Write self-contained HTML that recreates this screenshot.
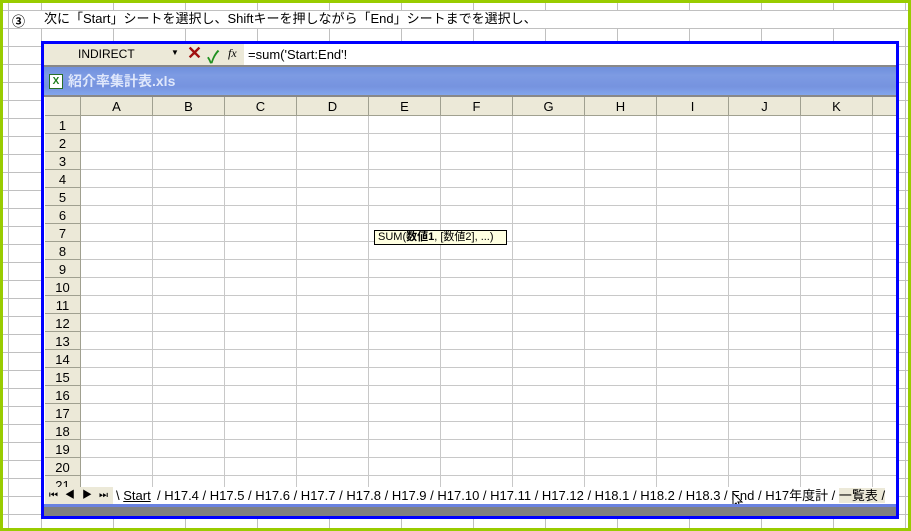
<!DOCTYPE html>
<html><head><meta charset="utf-8"><style>
*{margin:0;padding:0;box-sizing:border-box}
body{width:911px;height:531px;position:relative;overflow:hidden;background:#fff;font-family:"Liberation Sans","Noto Sans CJK JP",sans-serif}
.abs{position:absolute}
#bg{left:0;top:0;width:911px;height:531px;
background-image:linear-gradient(to right,#c0c0c0 1px,transparent 1px),linear-gradient(to bottom,#c0c0c0 1px,transparent 1px);
background-size:72px 18px;background-position:41px 10px}
#bgl{left:8px;top:0;width:1px;height:531px;background:#c0c0c0}
#green{left:0;top:0;width:911px;height:531px;border:3px solid #99cc00}
#win{left:41px;top:41px;width:858px;height:478px;border:3px solid #0000ff;background:#fff;overflow:hidden}
#fb{left:0;top:0;width:852px;height:21px;background:#ece9d8}
#fw{left:200px;top:0;width:652px;height:21px;background:#fff;font-size:13px;line-height:21px;padding-left:4px}
#title{left:0;top:21px;width:852px;height:32px;background:linear-gradient(#6f8fdc,#7d9be3 30%,#7693df 70%,#82a5ec);border-top:2px solid #888;border-bottom:2px solid #888;color:#dfe7fb;font-size:14px;font-weight:bold;line-height:28px;padding-left:24px}
#grid{left:1px;top:53px;width:851px;height:390px;overflow:hidden}
.ch{position:absolute;top:0;height:19px;background:#ece9d8;border-right:1px solid #a0a090;border-bottom:1px solid #a0a090;font-size:13px;text-align:center;line-height:19px}
.rh{position:absolute;left:0;width:36px;height:18px;background:#ece9d8;border-right:1px solid #a0a090;border-bottom:1px solid #a0a090;font-size:13px;text-align:center;line-height:19px}
#cells{left:36px;top:19px;width:820px;height:380px;background-image:linear-gradient(to right,#c8c8c8 1px,transparent 1px),linear-gradient(to bottom,#c8c8c8 1px,transparent 1px);background-size:72px 18px;background-position:71px 17px}
#tabs{left:0;top:443px;width:852px;height:17px;background:#fff;font-size:13px;line-height:17px}
.t{position:absolute;top:0}
#sb{left:0;top:460px;width:852px;height:12px;background:#808080;border-top:3px solid #6a82e0}
</style></head><body>
<div id="bg" class="abs"></div>
<div id="bgl" class="abs"></div>
<div class="abs" style="left:9px;top:11px;width:899px;height:17px;background:#fff"></div>
<div class="abs" style="left:12px;top:11px;font-size:13px;font-weight:bold">③</div>
<div class="abs" style="left:44px;top:10px;font-size:13px;line-height:18px">次に「Start」シートを選択し、Shiftキーを押しながら「End」シートまでを選択し、</div>
<div id="green" class="abs"></div>
<div id="win" class="abs">
 <div id="fb" class="abs">
  <span class="abs" style="left:34px;top:3px;font-size:12px">INDIRECT</span>
  <span class="abs" style="left:127px;top:4px;font-size:8px">▼</span>
  <span class="abs" style="left:143px;top:-1px;font-size:18px;color:#a01010;font-weight:bold">✕</span>
  <span class="abs" style="left:163px;top:-1px;font-size:17px;color:#209020;font-weight:bold">✓</span>
  <span class="abs" style="left:184px;top:2px;font-size:12px;font-style:italic;font-family:'Liberation Serif',serif">fx</span>
  <div id="fw" class="abs">=sum('Start:End'!</div>
 </div>
 <div id="title" class="abs"><span class="abs" style="left:5px;top:7px;width:14px;height:15px;background:#fff;border:1px solid #286f28;font-size:10px;color:#1a7a1a;line-height:13px;text-align:center">X</span>紹介率集計表.xls</div>
 <div id="grid" class="abs">
  <div class="ch" style="left:0;width:36px"></div>
  <div class="ch" style="left:36px;width:72px">A</div><div class="ch" style="left:108px;width:72px">B</div><div class="ch" style="left:180px;width:72px">C</div><div class="ch" style="left:252px;width:72px">D</div><div class="ch" style="left:324px;width:72px">E</div><div class="ch" style="left:396px;width:72px">F</div><div class="ch" style="left:468px;width:72px">G</div><div class="ch" style="left:540px;width:72px">H</div><div class="ch" style="left:612px;width:72px">I</div><div class="ch" style="left:684px;width:72px">J</div><div class="ch" style="left:756px;width:72px">K</div><div class="ch" style="left:828px;width:30px"></div>
  <div id="cells" class="abs"></div>
  <div class="rh" style="top:19px">1</div><div class="rh" style="top:37px">2</div><div class="rh" style="top:55px">3</div><div class="rh" style="top:73px">4</div><div class="rh" style="top:91px">5</div><div class="rh" style="top:109px">6</div><div class="rh" style="top:127px">7</div><div class="rh" style="top:145px">8</div><div class="rh" style="top:163px">9</div><div class="rh" style="top:181px">10</div><div class="rh" style="top:199px">11</div><div class="rh" style="top:217px">12</div><div class="rh" style="top:235px">13</div><div class="rh" style="top:253px">14</div><div class="rh" style="top:271px">15</div><div class="rh" style="top:289px">16</div><div class="rh" style="top:307px">17</div><div class="rh" style="top:325px">18</div><div class="rh" style="top:343px">19</div><div class="rh" style="top:361px">20</div><div class="rh" style="top:379px">21</div>
  <div class="abs" style="left:329px;top:133px;width:133px;height:15px;background:#ffffe1;border:1px solid #000;font-size:11px;line-height:13px;padding-left:3px;white-space:nowrap">SUM(<b>数値1</b>, [数値2], ...)</div>
 </div>
 <div id="tabs" class="abs">
  <div class="abs" style="left:1px;top:0;width:68px;height:17px;background:#ece9d8;font-size:10px;letter-spacing:7px;padding-left:4px">⏮◀▶⏭</div>
  <span class="t" style="left:72px">\ <u>Start</u></span>
  <div class="abs" style="left:113px;top:0;width:739px;height:17px;font-size:13px;white-space:nowrap">/ H17.4 / H17.5 / H17.6 / H17.7 / H17.8 / H17.9 / H17.10 / H17.11 / H17.12 / H18.1 / H18.2 / H18.3 / End / H17年度計 / <span style="background:#ece9d8">一覧表 /</span></div>
  <svg class="abs" style="left:688px;top:5px" width="12" height="18" viewBox="0 0 12 18"><path d="M1 1 L1 14 L4 11 L7 17 L9 16 L6 10 L10 10 Z" fill="#fff" stroke="#000" stroke-width="1"/></svg>
 </div>
 <div id="sb" class="abs"></div>
</div>
</body></html>
